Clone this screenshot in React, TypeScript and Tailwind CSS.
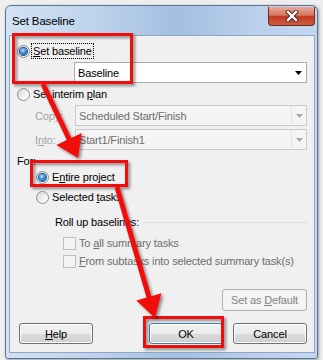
import React from "react";

type Pt = [number, number];

function arrowPoints(x1: number, y1: number, x2: number, y2: number, shaft: number, headW: number, headL: number) {
    const dx = x2 - x1, dy = y2 - y1, len = Math.hypot(dx, dy);
    const ux = dx / len, uy = dy / len, px = -uy, py = ux;
    const bx = x2 - ux * headL, by = y2 - uy * headL;
    const pts: Pt[] = [
        [x1 + px * shaft, y1 + py * shaft],
        [bx + px * shaft, by + py * shaft],
        [bx + px * headW, by + py * headW],
        [x2, y2],
        [bx - px * headW, by - py * headW],
        [bx - px * shaft, by - py * shaft],
        [x1 - px * shaft, y1 - py * shaft],
    ];
    return pts.map((p) => p.map((v) => v.toFixed(1)).join(",")).join(" ");
}

function Radio({ checked }: { checked?: boolean }) {
    return (
        <span className="w-[13px] h-[13px] shrink-0 rounded-full border border-[#8b8e91] bg-[linear-gradient(135deg,#d4d6d8,#f7f7f7_70%,#ffffff)] flex items-center justify-center">
            {checked && <span className="w-[7px] h-[7px] rounded-full bg-[radial-gradient(circle_at_40%_35%,#bfe6ff_0%,#3a8ad9_45%,#0d4a96_100%)] shadow-[0_0_0_1px_#1b4f8a]" />}
        </span>
    );
}

function Check() {
    return <span className="w-[13px] h-[13px] shrink-0 border border-[#bcbfc2] bg-[#f4f4f4]" />;
}

function Combo({ text, disabled, className }: { text: string; disabled?: boolean; className: string }) {
    return (
        <div className={`${className} h-[21px] flex items-center border ${disabled ? "border-[#c9cbcd] bg-[#f4f4f4] text-[#6d6d6d]" : "border-[#abadb3] bg-white text-black"}`}>
            <span className="flex-1 pl-[3px]">{text}</span>
            <span className={`w-[15px] h-full flex items-center justify-center ${disabled ? "border-l border-[#e2e3e4]" : ""}`}>
                <svg width="7" height="4" viewBox="0 0 7 4"><path d="M0 0h7L3.5 4z" fill={disabled ? "#a8a8a8" : "#000"} /></svg>
            </span>
        </div>
    );
}

const btn = "h-[21px] rounded-[3px] border flex items-center justify-center bg-[linear-gradient(to_bottom,#f2f2f2_0%,#ebebeb_50%,#dddddd_51%,#cfcfcf_100%)] shadow-[inset_0_0_0_1px_#fcfcfc]";

export default function App() {
    return (
        <div className="w-[323px] h-[360px] relative overflow-hidden bg-[#eeeeee] text-[11px] leading-[16px] tracking-[-0.15px] [font-family:'Liberation_Sans',Arial,sans-serif]">
            <div className="ml-[5px] mt-[5px] w-[313px] h-[354px] border border-[#587594] rounded-t-[6px] rounded-b-[3px] bg-[linear-gradient(90deg,#d3e2f4_0%,#bcd2ec_30%,#a3bfe1_55%,#bad0eb_80%,#c3d7ef_100%)] flex flex-col shadow-[1px_1px_3px_rgba(0,0,0,0.35)]">
                <div className="h-[29px] flex items-start justify-between">
                    <span className="pl-[6px] pt-[8px] leading-[14px] text-[11.5px] text-black">Set Baseline</span>
                    <span className="mt-[1px] mr-[2px] w-[47px] h-[19px] rounded-b-[4px] border border-[#6e2a20] border-t-0 bg-[linear-gradient(to_bottom,#e9a898_0%,#d57a63_45%,#c23b1f_52%,#cf5a42_100%)] flex items-center justify-center">
                        <svg width="14" height="12" viewBox="0 0 14 12">
                            <path d="M3 2l8 8M11 2l-8 8" stroke="#4a2620" strokeWidth="4.4" strokeLinecap="square" />
                            <path d="M3 2l8 8M11 2l-8 8" stroke="#fff" strokeWidth="2.4" strokeLinecap="square" />
                        </svg>
                    </span>
                </div>
                <div className="ml-[3px] w-[306px] h-[318px] border border-[#8fa7c5] bg-[#f0f0f0] flex flex-col text-black">
                    <div className="mt-[7px] h-[16px] flex items-center pl-[7px]">
                        <Radio checked />
                        <span className="ml-[1px] px-[1px] border border-dotted border-black leading-[14px]"><u>S</u>et baseline</span>
                    </div>
                    <Combo text="Baseline" className="mt-[3px] ml-[64px] w-[233px]" />
                    <div className="mt-[3px] h-[16px] flex items-center pl-[7px]">
                        <Radio />
                        <span className="ml-[3px]">Set interim <u>p</u>lan</span>
                    </div>
                    <div className="mt-[3px] h-[21px] flex items-center">
                        <span className="pl-[25px] w-[65px] text-[#a3a3a3]">Cop<u>y</u>:</span>
                        <Combo text="Scheduled Start/Finish" disabled className="w-[232px]" />
                    </div>
                    <div className="mt-[3px] h-[21px] flex items-center">
                        <span className="pl-[25px] w-[65px] text-[#a3a3a3]">I<u>n</u>to:</span>
                        <Combo text="Start1/Finish1" disabled className="w-[232px]" />
                    </div>
                    <div className="mt-[3px] h-[16px] flex items-center pl-[7px]">For:</div>
                    <div className="h-[16px] flex items-center pl-[26px]">
                        <Radio checked />
                        <span className="ml-[3px]">E<u>n</u>tire project</span>
                    </div>
                    <div className="mt-[4px] h-[16px] flex items-center pl-[26px]">
                        <Radio />
                        <span className="ml-[3px]">Selected <u>t</u>asks</span>
                    </div>
                    <div className="mt-[9px] h-[16px] flex items-center pl-[45px]">
                        <span>Roll up baselines:</span>
                        <span className="flex-1 h-px bg-[#d5dfe5] ml-[3px] mr-[6px]" />
                    </div>
                    <div className="mt-[5px] h-[16px] flex items-center pl-[53px] text-[#6d6d6d]">
                        <Check />
                        <span className="ml-[3px]">To <u>a</u>ll summary tasks</span>
                    </div>
                    <div className="mt-[2px] h-[16px] flex items-center pl-[53px] text-[#6d6d6d]">
                        <Check />
                        <span className="ml-[3px]"><u>F</u>rom subtasks into selected summary task(s)</span>
                    </div>
                    <div className="mt-[20px] ml-[212px] w-[85px] h-[22px] rounded-[3px] border border-[#adb2b5] bg-[#f4f4f4] text-[#838383] flex items-center justify-center">
                        <span>Set as <u>D</u>efault</span>
                    </div>
                    <div className="mt-[12px] flex">
                        <div className={`${btn} ml-[9px] w-[74px] border-[#707070]`}><span><u>H</u>elp</span></div>
                        <div className={`${btn} ml-[56px] w-[74px] border-[#3c7fb1] shadow-[inset_0_0_0_1px_#9fe0f7]`}>OK</div>
                        <div className={`${btn} ml-[10px] w-[74px] border-[#707070]`}>Cancel</div>
                    </div>
                </div>
            </div>

            <svg className="absolute inset-0 pointer-events-none" width="323" height="360" viewBox="0 0 323 360">
                <defs>
                    <filter id="sh" x="-20%" y="-20%" width="140%" height="140%">
                        <feDropShadow dx="2" dy="2" stdDeviation="1.8" floodColor="#000" floodOpacity="0.45" />
                    </filter>
                </defs>
                <g filter="url(#sh)" fill="none" stroke="#f20d0d" strokeWidth="3">
                    <rect x="13.5" y="34.5" width="118" height="48" />
                    <rect x="31.5" y="161.5" width="95" height="24" />
                    <rect x="144.5" y="317.5" width="78" height="29" />
                </g>
                <g filter="url(#sh)" fill="#f20d0d">
                    <polygon points={arrowPoints(43, 84, 78, 158, 2.5, 14, 21)} />
                    <polygon points={arrowPoints(117, 187, 155, 318, 2.5, 13, 22)} />
                </g>
            </svg>
        </div>
    );
}
